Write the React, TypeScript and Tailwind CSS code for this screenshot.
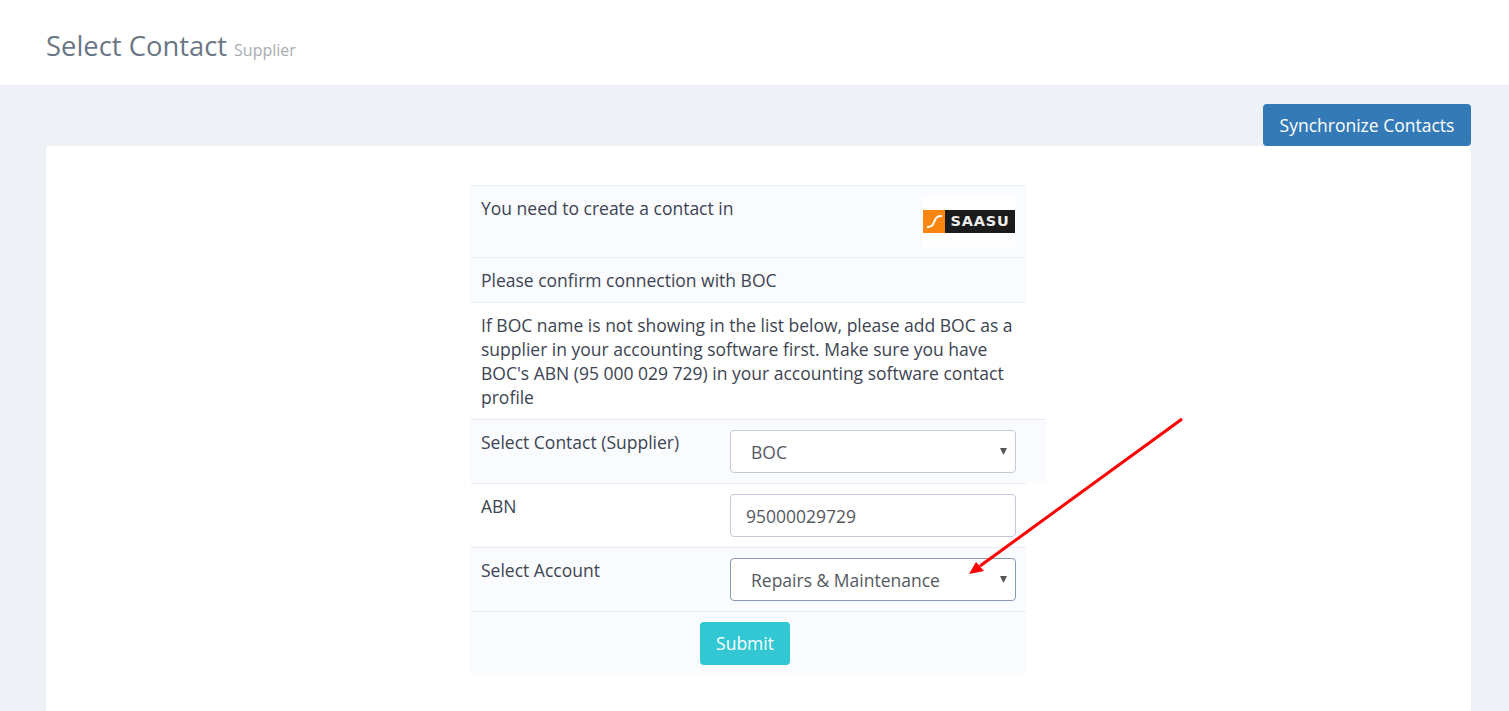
import { ReactNode } from 'react';

const font = { fontFamily: '"Open Sans", "Liberation Sans", sans-serif' };

function SaasuLogo() {
  return (
    <div className="flex h-[51px] w-[94px] items-center justify-center bg-white">
      <div className="flex h-[23px] w-[92px]">
        <div className="flex w-[22px] items-center justify-center bg-[#fb860f]">
          <svg viewBox="0 0 22 23" className="h-[23px] w-[22px]" fill="none">
            <path d="M4 17 C9 17 10 15 11.5 11 C13 7.5 14 6 19 6" stroke="#fff" strokeWidth="2" />
          </svg>
        </div>
        <div
          className="flex flex-1 items-center justify-center bg-[#1b1b1b] text-[14.5px] leading-none font-bold tracking-[0.8px] text-[#eeeeee]"
          style={{ fontFamily: '"DejaVu Sans", sans-serif' }}
        >
          SAASU
        </div>
      </div>
    </div>
  );
}

function SelectBox({ value, active = false }: { value: string; active?: boolean }) {
  return (
    <div className="relative h-[43px]">
      <select
        className={`h-[43px] w-full appearance-none rounded-[4px] border bg-white pr-4 pl-5 text-[#55595f] ${active ? 'border-[#8a97b6]' : 'border-[#c2cad8]'}`}
        defaultValue={value}
      >
        <option>{value}</option>
      </select>
      <svg className="pointer-events-none absolute top-[18px] right-[9px] h-[7px] w-[7px]" viewBox="0 0 7 7">
        <polygon points="0,0 7,0 3.5,7" fill="#555555" />
      </svg>
    </div>
  );
}

function FormRow({
  label,
  children,
  shaded = false,
  wide = false,
}: {
  label: string;
  children: ReactNode;
  shaded?: boolean;
  wide?: boolean;
}) {
  return (
    <div
      className={`flex h-[64px] border-t border-[#e9ecf2] py-[10px] pl-[10px] ${shaded ? 'bg-[#fafbfe]' : 'bg-white'} ${wide ? 'w-[575px]' : 'w-[555px]'}`}
    >
      <div className="w-[249px] shrink-0 text-[#3d4452]">{label}</div>
      <div className="w-[286px]">{children}</div>
    </div>
  );
}

function ArrowOverlay() {
  return (
    <svg className="pointer-events-none absolute top-0 left-0 h-[711px] w-[1509px]" viewBox="0 0 1509 711" fill="none">
      <line x1="1182" y1="419" x2="980" y2="566" stroke="#ff0000" strokeWidth="3" />
      <polygon points="969,574 976,562 984,571" fill="#ff0000" />
    </svg>
  );
}

export default function App() {
  return (
    <div className="relative flex h-[711px] flex-col overflow-hidden bg-[#eef1f6] text-[17.5px] leading-6" style={font}>
      <header className="flex h-[85px] shrink-0 items-baseline bg-white pt-[26px] pl-[46px]">
        <h1 className="text-[27.4px] leading-[40px] font-normal text-[#6b7785]">Select Contact</h1>
        <span className="ml-[7px] text-base text-[#a9acb1]">Supplier</span>
      </header>

      <div className="flex flex-1 flex-col pt-[19px] pr-[38px] pl-[46px]">
        <div className="flex justify-end">
          <button type="button" className="h-[42px] w-[208px] rounded-[4px] bg-[#337ab7] text-white">
            Synchronize Contacts
          </button>
        </div>

        <div className="flex-1 rounded-t-[4px] bg-white pt-[39px] pl-[425px]">
          <div className="flex h-[72px] w-[555px] justify-between border-t border-[#e9ecf2] bg-[#fafbfe] pt-[10px] pr-[10px] pl-[10px]">
            <div className="text-[#3d4452]">You need to create a contact in</div>
            <SaasuLogo />
          </div>
          <div className="h-[45px] w-[555px] border-t border-[#e9ecf2] bg-[#fafbfe] pt-[10px] pl-[10px] text-[#3d4452]">
            Please confirm connection with BOC
          </div>
          <div className="h-[117px] w-[555px] border-t border-[#e9ecf2] bg-white pt-[10px] pr-[10px] pl-[10px] text-[#3d4452]">
            If BOC name is not showing in the list below, please add BOC as a supplier in your accounting software
            first. Make sure you have BOC's ABN (95 000 029 729) in your accounting software contact profile
          </div>

          <FormRow label="Select Contact (Supplier)" shaded wide>
            <SelectBox value="BOC" />
          </FormRow>
          <FormRow label="ABN">
            <input
              className="h-[43px] w-full rounded-[4px] border border-[#c2cad8] bg-white px-[15px] text-[#55595f]"
              defaultValue="95000029729"
            />
          </FormRow>
          <FormRow label="Select Account" shaded>
            <SelectBox value="Repairs & Maintenance" active />
          </FormRow>

          <div className="h-[64px] w-[555px] border-t border-[#e9ecf2] bg-[#fafbfe] pt-[10px] pl-[229px]">
            <button type="button" className="h-[43px] w-[90px] rounded-[4px] bg-[#31c8d4] pb-[2px] text-white">
              Submit
            </button>
          </div>
        </div>
      </div>

      <ArrowOverlay />
    </div>
  );
}
